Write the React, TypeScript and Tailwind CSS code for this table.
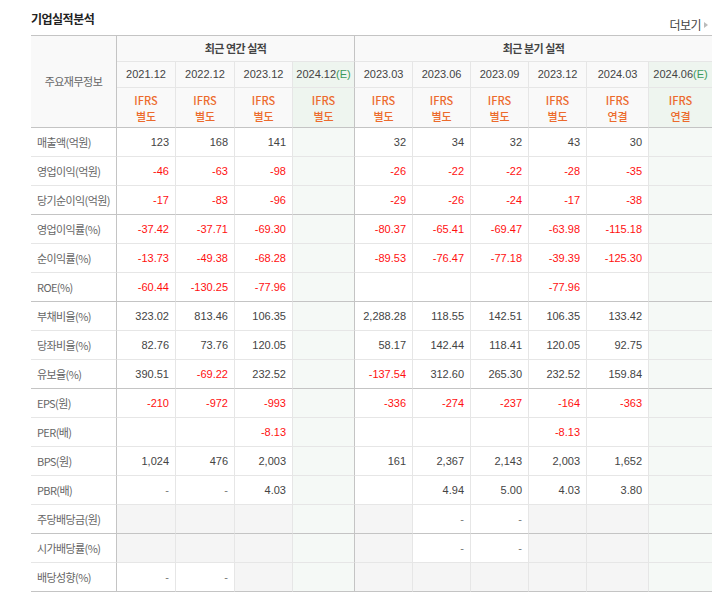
import React from 'react';

const KR = "font-['Noto_Sans_CJK_KR','Noto_Sans',sans-serif]";
const NUM = "font-['Liberation_Sans','Noto_Sans_CJK_KR',sans-serif]";

type Col = { date: string; est?: boolean; kind: string };

const cols: Col[] = [
    { date: '2021.12', kind: '별도' },
    { date: '2022.12', kind: '별도' },
    { date: '2023.12', kind: '별도' },
    { date: '2024.12', est: true, kind: '별도' },
    { date: '2023.03', kind: '별도' },
    { date: '2023.06', kind: '별도' },
    { date: '2023.09', kind: '별도' },
    { date: '2023.12', kind: '별도' },
    { date: '2024.03', kind: '연결' },
    { date: '2024.06', est: true, kind: '연결' },
];

// null = gray empty cell, '' = white empty cell
const rows: { label: string; values: (string | null)[] }[] = [
    { label: '매출액(억원)', values: ['123', '168', '141', '', '32', '34', '32', '43', '30', ''] },
    { label: '영업이익(억원)', values: ['-46', '-63', '-98', '', '-26', '-22', '-22', '-28', '-35', ''] },
    { label: '당기순이익(억원)', values: ['-17', '-83', '-96', '', '-29', '-26', '-24', '-17', '-38', ''] },
    { label: '영업이익률(%)', values: ['-37.42', '-37.71', '-69.30', '', '-80.37', '-65.41', '-69.47', '-63.98', '-115.18', ''] },
    { label: '순이익률(%)', values: ['-13.73', '-49.38', '-68.28', '', '-89.53', '-76.47', '-77.18', '-39.39', '-125.30', ''] },
    { label: 'ROE(%)', values: ['-60.44', '-130.25', '-77.96', '', '', '', '', '-77.96', '', ''] },
    { label: '부채비율(%)', values: ['323.02', '813.46', '106.35', '', '2,288.28', '118.55', '142.51', '106.35', '133.42', ''] },
    { label: '당좌비율(%)', values: ['82.76', '73.76', '120.05', '', '58.17', '142.44', '118.41', '120.05', '92.75', ''] },
    { label: '유보율(%)', values: ['390.51', '-69.22', '232.52', '', '-137.54', '312.60', '265.30', '232.52', '159.84', ''] },
    { label: 'EPS(원)', values: ['-210', '-972', '-993', '', '-336', '-274', '-237', '-164', '-363', ''] },
    { label: 'PER(배)', values: ['', '', '-8.13', '', '', '', '', '-8.13', '', ''] },
    { label: 'BPS(원)', values: ['1,024', '476', '2,003', '', '161', '2,367', '2,143', '2,003', '1,652', ''] },
    { label: 'PBR(배)', values: ['-', '-', '4.03', '', '', '4.94', '5.00', '4.03', '3.80', ''] },
    { label: '주당배당금(원)', values: [null, null, null, '', null, '-', '-', null, null, ''] },
    { label: '시가배당률(%)', values: [null, null, null, '', null, '-', '-', null, null, ''] },
    { label: '배당성향(%)', values: ['-', '-', null, '', null, null, null, null, null, ''] },
];

const groupEnds = [2, 5, 8, 13, 15];

const rightBorder = (i: number) => {
    if (i === 9) return '';
    if (i === 3) return 'border-r border-r-[#c4c4c4]';
    return 'border-r border-r-[#e6e6e6]';
};

const valueColor = (v: string) => {
    if (v === '-') return 'text-[#777]';
    if (v.startsWith('-')) return 'text-[#ff1010]';
    return 'text-[#444]';
};

const App = () => {
    return (
        <div className="w-[715px] h-[597px] bg-white overflow-hidden pl-[31px] pr-[3px]">
            <div className="flex justify-between h-[35px]">
                <p className={`${KR} text-[12px] leading-[12px] font-bold text-[#222] pt-[13px] tracking-[-0.5px]`}>기업실적분석</p>
                <div className={`${KR} flex items-center gap-[3px] text-[12px] leading-[12px] text-[#444] pt-[19px] pr-[4px] self-start`}>
                    <span className="tracking-[-0.5px]">더보기</span>
                    <span className="w-0 h-0 border-y-[3px] border-y-transparent border-l-[4px] border-l-[#bbb]" />
                </div>
            </div>

            <table className="table-fixed border-separate border-spacing-0 w-[681px]">
                <colgroup>
                    <col className="w-[86px]" />
                    <col className="w-[59px]" />
                    <col className="w-[59px]" />
                    <col className="w-[58px]" />
                    <col className="w-[62px]" />
                    <col className="w-[58px]" />
                    <col className="w-[58px]" />
                    <col className="w-[58px]" />
                    <col className="w-[58px]" />
                    <col className="w-[62px]" />
                    <col className="w-[63px]" />
                </colgroup>
                <thead>
                    <tr>
                        <th rowSpan={3} className={`${KR} font-normal text-[11px] text-[#666] bg-[#f9f9f9] border-t border-t-[#c4c4c4] border-b border-b-[#c4c4c4] border-r border-r-[#c4c4c4] tracking-[-0.5px]`}>
                            주요재무정보
                        </th>
                        <th colSpan={4} className={`${KR} h-[27px] font-bold text-[11px] text-[#444] bg-[#f9f9f9] border-t border-t-[#c4c4c4] border-b border-b-[#e6e6e6] border-r border-r-[#c4c4c4] tracking-[-0.5px]`}>
                            최근 연간 실적
                        </th>
                        <th colSpan={6} className={`${KR} font-bold text-[11px] text-[#444] bg-[#f9f9f9] border-t border-t-[#c4c4c4] border-b border-b-[#e6e6e6] tracking-[-0.5px]`}>
                            최근 분기 실적
                        </th>
                    </tr>
                    <tr>
                        {cols.map((c, i) => (
                            <th key={i} className={`${NUM} h-[26px] font-normal text-[11px] text-[#444] border-b border-b-[#e6e6e6] ${rightBorder(i)} ${c.est ? 'bg-[#eef5ef]' : 'bg-[#f9f9f9]'}`}>
                                {c.date}
                                {c.est && <span className="text-[#3b9a5c]">(E)</span>}
                            </th>
                        ))}
                    </tr>
                    <tr>
                        {cols.map((c, i) => (
                            <th key={i} className={`${KR} h-[40px] font-medium text-[11px] leading-[16px] text-[#ec6a2c] border-b border-b-[#c4c4c4] ${rightBorder(i)} ${c.est ? 'bg-[#eef5ef]' : 'bg-[#f9f9f9]'}`}>
                                <div>IFRS</div>
                                <div>{c.kind}</div>
                            </th>
                        ))}
                    </tr>
                </thead>
                <tbody>
                    {rows.map((r, ri) => {
                        const rowBorder = groupEnds.includes(ri) ? 'border-b border-b-[#c4c4c4]' : 'border-b border-b-[#e6e6e6]';
                        return (
                            <tr key={ri}>
                                <td className={`${KR} h-[29px] pl-[6px] text-left text-[11px] text-[#666] tracking-[-0.6px] whitespace-nowrap bg-white border-r border-r-[#c4c4c4] ${rowBorder}`}>
                                    {r.label}
                                </td>
                                {r.values.map((v, ci) => {
                                    const bg = cols[ci].est ? 'bg-[#f5f9f6]' : v === null ? 'bg-[#f5f5f5]' : 'bg-white';
                                    return (
                                        <td key={ci} className={`${NUM} h-[29px] pr-[6px] text-right text-[11px] whitespace-nowrap ${bg} ${rightBorder(ci)} ${rowBorder} ${v ? valueColor(v) : ''}`}>
                                            {v}
                                        </td>
                                    );
                                })}
                            </tr>
                        );
                    })}
                </tbody>
            </table>
        </div>
    );
};

export default App;
